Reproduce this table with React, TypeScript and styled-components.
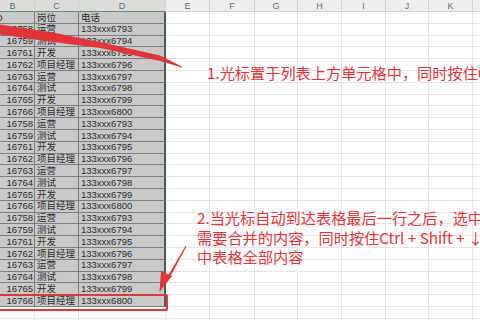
import styled, { createGlobalStyle } from "styled-components";

const GlobalStyle = createGlobalStyle`
  html, body {
    margin: 0;
    padding: 0;
    background: #fff;
    overflow: hidden;
  }
`;

const RED = "#e1353a";

const Page = styled.div`
  position: relative;
  width: 480px;
  height: 320px;
  overflow: hidden;
  background: #fff;
  font-family: "Liberation Sans", "Noto Sans CJK SC", sans-serif;
`;

const Sheet = styled.div`
  display: grid;
  margin-left: -9px;
  grid-template-columns: 44px 44px 87px 44px 45px 43px 44px 44px 43px 44px 44px;
  grid-template-rows: 12px;
  grid-auto-rows: 11.8px;
`;

const ColHead = styled.div<{ $sel?: boolean }>`
  box-sizing: border-box;
  display: flex;
  align-items: center;
  justify-content: center;
  font-size: 9px;
  color: ${(p) => (p.$sel ? "#4f6e58" : "#6a6a6a")};
  background: ${(p) => (p.$sel ? "#dcdcdc" : "#eeeeee")};
  border-right: 1px solid #d2d2d2;
  border-bottom: 1px solid ${(p) => (p.$sel ? "#5b8f69" : "#d4d4d4")};
`;

const Cell = styled.div<{ $fill?: boolean; $right?: boolean; $edge?: boolean }>`
  box-sizing: border-box;
  display: flex;
  align-items: center;
  justify-content: ${(p) => (p.$right ? "flex-end" : "flex-start")};
  padding: 0 1px 0 2px;
  font-size: 9.5px;
  line-height: 1;
  white-space: nowrap;
  overflow: hidden;
  color: #2a2a2a;
  font-family: "Liberation Sans", "Noto Sans CJK SC", sans-serif;
  background: ${(p) => (p.$fill ? "#c9c9c9" : "#fff")};
  border-bottom: 1px solid ${(p) => (p.$fill ? "#7c7c7c" : "#e4e4e4")};
  border-right: ${(p) =>
    p.$edge ? "2px solid #46604e" : p.$fill ? "1px solid #7c7c7c" : "1px solid #e4e4e4"};
`;

const Note = styled.div<{ $top: number; $left: number }>`
  position: absolute;
  top: ${(p) => p.$top}px;
  left: ${(p) => p.$left}px;
  color: ${RED};
  font-family: "Noto Sans CJK SC", "Liberation Sans", sans-serif;
  font-size: 15.2px;
  line-height: 19.5px;
  white-space: nowrap;
`;

const Marks = styled.svg`
  position: absolute;
  inset: 0;
  pointer-events: none;
`;

const HiliteBox = styled.div`
  position: absolute;
  left: -2px;
  top: 294px;
  width: 166px;
  height: 13px;
  border: 2px solid ${RED};
  border-radius: 2px;
`;

const letters = ["B", "C", "D", "E", "F", "G", "H", "I", "J", "K", "L"];
const cycle: [string, string, string][] = [
  ["16758", "运营", "133xxx6793"],
  ["16759", "测试", "133xxx6794"],
  ["16761", "开发", "133xxx6795"],
  ["16762", "项目经理", "133xxx6796"],
  ["16763", "运营", "133xxx6797"],
  ["16764", "测试", "133xxx6798"],
  ["16765", "开发", "133xxx6799"],
  ["16766", "项目经理", "133xxx6800"],
];

const rows: ([string, string, string] | null)[] = [
  ["ID", "岗位", "电话"],
  ...cycle,
  ...cycle,
  ...cycle,
  null,
  null,
];

export default function App() {
  return (
    <>
      <GlobalStyle />
      <Page>
        <Sheet>
          {letters.map((l, i) => (
            <ColHead key={l} $sel={i < 3}>
              {l}
            </ColHead>
          ))}
          {rows.map((r, ri) =>
            letters.map((_, ci) => {
              const fill = !!r && ci < 3;
              const text = r && ci < 3 ? r[ci] : "";
              return (
                <Cell
                  key={`${ri}-${ci}`}
                  $fill={fill}
                  $right={ci === 0 && ri > 0}
                  $edge={fill && ci === 2}
                >
                  {text}
                </Cell>
              );
            })
          )}
        </Sheet>

        <HiliteBox />

        <Marks width="480" height="320" viewBox="0 0 480 320">
          <polygon
            fill={RED}
            points="-4,24 53,32.5 100,42 160,55.5 182,66.6 182,67.6 160,61 100,48 53,42 -4,34"
          />
          <polygon fill={RED} points="185.5,246 186.5,246.5 168,281 165.5,280" />
          <polygon fill={RED} points="159.5,292 161,271 172,276" />
        </Marks>

        <Note $top={63} $left={207}>
          1.光标置于列表上方单元格中，同时按住Ctrl
        </Note>
        <Note $top={208} $left={197}>
          2.当光标自动到达表格最后一行之后，选中
          <br />
          需要合并的内容，同时按住Ctrl + Shift + ↓
          <br />
          中表格全部内容
        </Note>
      </Page>
    </>
  );
}
